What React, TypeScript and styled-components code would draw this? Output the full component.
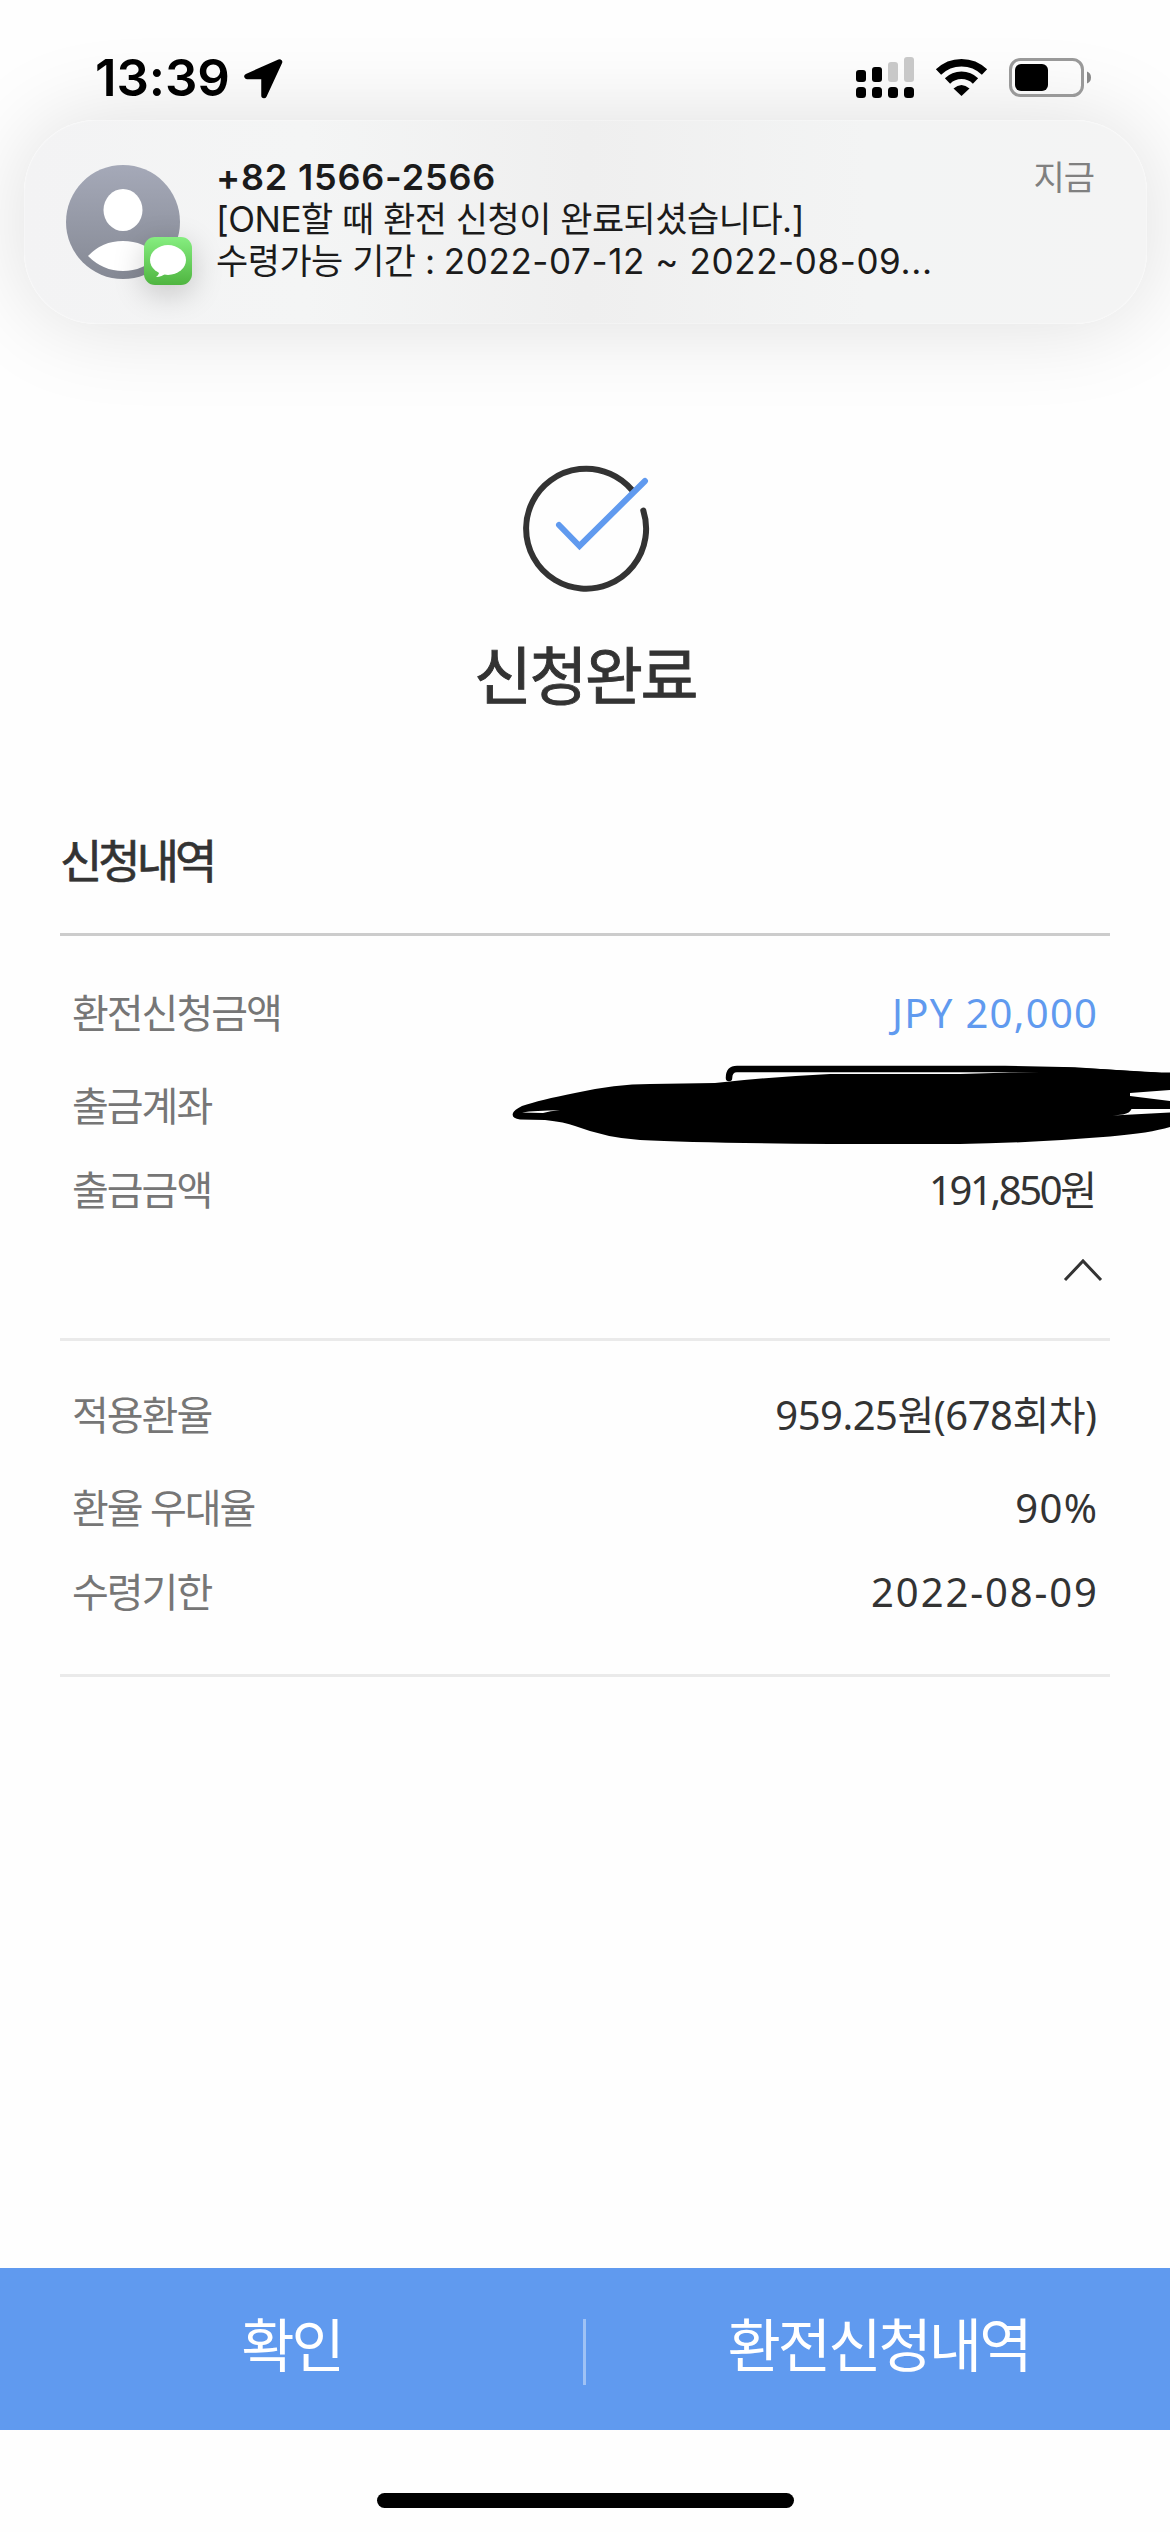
import React from 'react';
import styled, { createGlobalStyle } from 'styled-components';

const Global = createGlobalStyle`
  * { box-sizing: border-box; }
  body { margin: 0; background: #fff; }
`;

const Screen = styled.div`
  position: relative;
  width: 1170px;
  height: 2532px;
  overflow: hidden;
  display: flex;
  flex-direction: column;
  background: #fefefe;
  font-family: 'Noto Sans', 'Noto Sans CJK KR', sans-serif;
  color: #333;
`;

const StatusBar = styled.header`
  position: relative;
  z-index: 1;
  flex: none;
  height: 120px;
  padding: 0 78px 0 95px;
  display: flex;
  justify-content: space-between;
  align-items: flex-start;
`;

const Clock = styled.div`
  display: flex;
  gap: 12px;
  padding-top: 47px;
  font: 600 51px/62px Inter, sans-serif;
  letter-spacing: -0.1px;
  color: #000;
`;

const ArrowIcon = styled.svg`
  margin-top: 11px;
`;

const StatusIcons = styled.svg`
  margin-top: 55px;
`;

const Banner = styled.section`
  flex: none;
  display: flex;
  height: 204px;
  margin: 0 23px 0 24px;
  padding: 36px 53px 0 42px;
  border-radius: 72px;
  background: linear-gradient(90deg, #f3f3f4 0%, #f4f5f5 25%, #efefef 50%, #f3f4f4 75%, #f4f4f4 100%);
  box-shadow: 0 0 90px rgba(0, 0, 0, 0.13), inset 0 0 2px #fff;
`;

const Avatar = styled.svg`
  flex: none;
  overflow: visible;
  margin-top: 9px;
`;

const Message = styled.div`
  flex: 1;
  margin-left: 23px;
  font-family: Inter, 'Noto Sans CJK KR', sans-serif;
  font-size: 35px;
  line-height: 42px;
  color: #1b1b1b;
  white-space: nowrap;
`;

const Sender = styled.div`
  font-size: 36px;
  font-weight: 600;
  letter-spacing: 0.8px;
`;

const Line = styled.div`
  letter-spacing: -0.5px;
`;

const Period = styled.span`
  letter-spacing: 0.6px;
`;

const When = styled.time`
  font-size: 34px;
  line-height: 42px;
  letter-spacing: -1px;
  color: #808080;
`;

const Result = styled.section`
  flex: none;
  height: 609px;
  padding-top: 139px;
  display: flex;
  flex-direction: column;
  align-items: center;
`;

const Title = styled.h1`
  margin: 35px 0 0;
  font-size: 63px;
  line-height: 90px;
  font-weight: 400;
  -webkit-text-stroke: 0.9px #333;
  letter-spacing: -2.5px;
`;

const Details = styled.main`
  flex: 1;
  padding: 0 60px;
  margin-top: -120px;
`;

const Heading = styled.h2`
  margin: 0;
  height: 123px;
  padding-top: 12px;
  font-size: 46px;
  line-height: 70px;
  font-weight: 400;
  -webkit-text-stroke: 0.7px #333;
  letter-spacing: -4px;
  border-bottom: 3px solid #ccc;
`;

const Group = styled.div<{ $height: number; $top: number }>`
  height: ${(p) => p.$height}px;
  padding: ${(p) => p.$top}px 13px 0 12px;
  border-bottom: 3px solid #eaeaea;
`;

const Row = styled.div<{ $height: number }>`
  display: flex;
  justify-content: space-between;
  height: ${(p) => p.$height}px;
  line-height: 88px;
  font-size: 40px;
`;

const Label = styled.span`
  color: #767676;
  letter-spacing: -2px;
`;

const Value = styled.span<{ $spacing: number; $accent?: boolean }>`
  color: ${(p) => (p.$accent ? '#609aef' : '#333')};
  letter-spacing: ${(p) => p.$spacing}px;
  margin-right: ${(p) => -p.$spacing}px;
`;

const Toggle = styled.div`
  display: flex;
  justify-content: flex-end;
  padding-top: 27px;
  margin-right: -7px;
`;

const Scribble = styled.svg`
  position: absolute;
  left: 500px;
  top: 1050px;
`;

const Footer = styled.footer`
  flex: none;
  display: flex;
  height: 162px;
  background: #609aef;
`;

const Action = styled.button`
  flex: 1;
  padding: 0 0 14px;
  border: 0;
  background: none;
  color: #fff;
  font: 400 58px/80px 'Noto Sans CJK KR', sans-serif;
  letter-spacing: -3px;
`;

const Divider = styled.i`
  width: 3px;
  height: 66px;
  margin: 51px 1px 0 0;
  background: #9fc2f5;
`;

const HomeArea = styled.div`
  flex: none;
  height: 102px;
  padding-top: 63px;
`;

const HomeBar = styled.div`
  width: 417px;
  height: 15px;
  margin: 0 auto;
  border-radius: 8px;
  background: #000;
`;

const amounts = [
  { label: '환전신청금액', value: 'JPY 20,000', accent: true, spacing: 1.3, height: 93 },
  { label: '출금계좌', value: '', spacing: 0, height: 84 },
  { label: '출금금액', value: '191,850원', spacing: -2.4, height: 84 },
];

const terms = [
  { label: '적용환율', value: '959.25원(678회차)', spacing: -0.5, height: 93 },
  { label: '환율 우대율', value: '90%', spacing: 1.4, height: 84 },
  { label: '수령기한', value: '2022-08-09', spacing: 1.9, height: 84 },
];

export default function App() {
  return (
    <Screen>
      <Global />
      <StatusBar>
        <Clock>
          13:39
          <ArrowIcon width="42" height="42" viewBox="0 0 42 42">
            <path d="M37.500 4 5 18.500H22V37.500Z" fill="#000" stroke="#000" strokeWidth="5.500" strokeLinejoin="round" />
          </ArrowIcon>
        </Clock>
        <StatusIcons width="236" height="45" viewBox="856 55 236 45">
          <g fill="#000">
            <rect x="856" y="70" width="10" height="12" rx="3" />
            <rect x="872" y="67" width="10" height="15" rx="3" />
            <rect x="888" y="62" width="10" height="20" rx="3" fill="#c8c8c8" />
            <rect x="904" y="57" width="10" height="25" rx="3" fill="#c8c8c8" />
            {[856, 872, 888, 904].map((x) => (
              <rect key={x} x={x} y="87" width="10" height="11" rx="3.500" />
            ))}
            <path d="M953.500 88.500Q961.500 81.500 969.500 88.500L961.500 96Z" />
          </g>
          <g fill="none" stroke="#000" strokeWidth="7.500">
            <path d="M938.500 72A33 33 0 0 1 984.500 72" />
            <path d="M947.500 81A20 20 0 0 1 975.500 81" />
          </g>
          <rect x="1010.500" y="59.500" width="72" height="36" rx="10" fill="none" stroke="#999" strokeWidth="3" />
          <rect x="1015" y="64" width="33" height="27" rx="6" />
          <path d="M1087 71.500Q1091 73 1091 77.500Q1091 82 1087 83.500Z" fill="#888" />
        </StatusIcons>
      </StatusBar>

      <Banner>
        <Avatar width="127" height="120" viewBox="0 0 127 120">
          <defs>
            <linearGradient id="grey" x1="0" y1="0" x2="0" y2="1">
              <stop offset="0" stopColor="#a5a9b8" />
              <stop offset="1" stopColor="#858994" />
            </linearGradient>
            <linearGradient id="green" x1="0" y1="0" x2="0" y2="1">
              <stop offset="0" stopColor="#86ee80" />
              <stop offset="1" stopColor="#4fb540" />
            </linearGradient>
            <filter id="soft" x="-150%" y="-150%" width="400%" height="400%">
              <feGaussianBlur stdDeviation="16" />
            </filter>
          </defs>
          <circle cx="57" cy="57" r="57" fill="url(#grey)" />
          <ellipse cx="57" cy="45" rx="19.500" ry="21" fill="#fff" />
          <path d="M22 91Q36 76 57 76T92 91Q77 106 57 106T22 91Z" fill="#fff" />
          <rect x="78" y="80" width="48" height="48" rx="11" fill="#000" opacity=".2" filter="url(#soft)" />
          <rect x="78" y="72" width="48" height="48" rx="11" fill="url(#green)" />
          <ellipse cx="102" cy="95" rx="18" ry="15" fill="#fff" />
          <path d="M93 105Q94 109 90 112Q96 112 100 108Z" fill="#fff" />
        </Avatar>
        <Message>
          <Sender>+82 1566-2566</Sender>
          <Line>[ONE할 때 환전 신청이 완료되셨습니다.]</Line>
          <Line>
            수령가능 기간 : <Period>2022-07-12 ~ 2022-08-09...</Period>
          </Line>
        </Message>
        <When>지금</When>
      </Banner>

      <Result>
        <svg width="132" height="132" viewBox="519 463 132 132" fill="none" strokeWidth="6" strokeLinecap="round">
          <path d="M632 490A60 60 0 1 0 643.300 510.500" stroke="#333" />
          <path d="M559 525 579.500 546 645 481" stroke="#609aef" />
        </svg>
        <Title>신청완료</Title>
      </Result>

      <Details>
        <Heading>신청내역</Heading>
        <Group $height={405} $top={33}>
          {amounts.map((r) => (
            <Row key={r.label} $height={r.height}>
              <Label>{r.label}</Label>
              <Value $accent={r.accent} $spacing={r.spacing}>{r.value}</Value>
            </Row>
          ))}
          <Toggle>
            <svg width="42" height="28" viewBox="0 0 42 28">
              <path d="M3 23 21 4 39 23" fill="none" stroke="#333" strokeWidth="3" />
            </svg>
          </Toggle>
        </Group>
        <Group $height={336} $top={30}>
          {terms.map((r) => (
            <Row key={r.label} $height={r.height}>
              <Label>{r.label}</Label>
              <Value $spacing={r.spacing}>{r.value}</Value>
            </Row>
          ))}
        </Group>
      </Details>

      <Scribble width="670" height="110" viewBox="500 1050 670 110">
        <path d="M513 1113Q514 1110 522 1106Q540 1100 575 1093Q615 1084 650 1084L715 1083Q770 1077 830 1074L960 1074 1010 1072.500H1170V1090L1130 1093V1096L1170 1101V1109H1131.500Q1130 1113 1123 1114.500L1113 1115.500 1170 1112.500V1127Q1150 1133 1110 1136.500Q1030 1143 960 1144H830Q700 1143 640 1140Q607 1138 575 1126Q565 1122 545 1120L520 1119.500Q511 1118 513 1113Z" />
        <path d="M522 1112.500Q535 1110.500 560 1110.300Q550 1111 543 1113Z" fill="#fff" />
        <path
          d="M729 1078Q729 1069 737 1069H1005L1075 1070.500Q1110 1073 1170 1077"
          fill="none"
          stroke="#000"
          strokeWidth="6.500"
          strokeLinecap="round"
        />
        <path d="M1060 1067.300 1100 1069 1155 1072.300Q1165 1073 1170 1075V1084H1060Z" />
      </Scribble>

      <Footer>
        <Action>확인</Action>
        <Divider />
        <Action>환전신청내역</Action>
      </Footer>
      <HomeArea>
        <HomeBar />
      </HomeArea>
    </Screen>
  );
}
